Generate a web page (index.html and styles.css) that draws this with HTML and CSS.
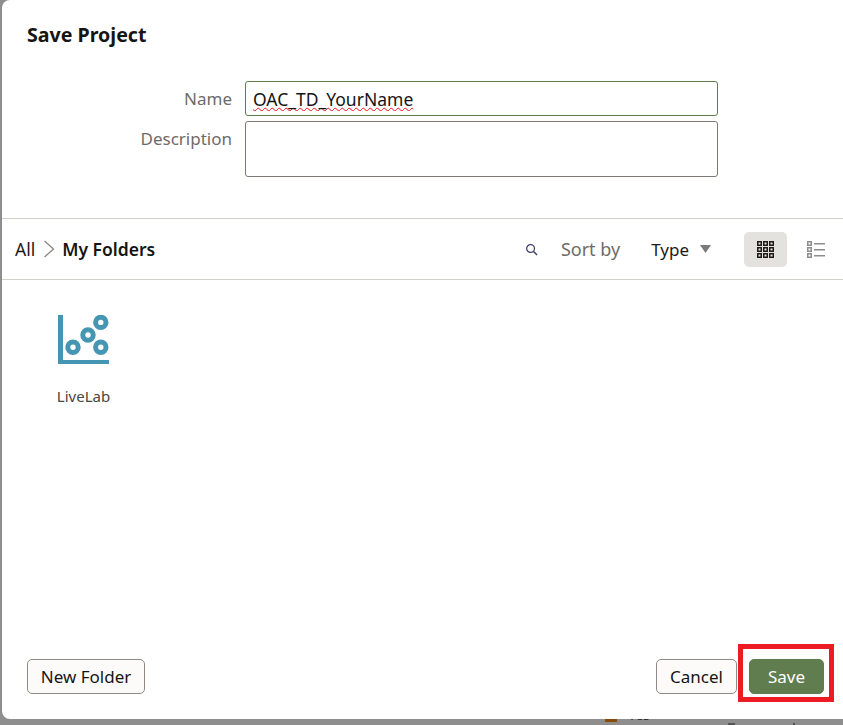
FILE: index.html
```html
<!DOCTYPE html>
<html lang="en">
<head>
  <meta charset="UTF-8">
  <title>Save Project</title>
  <link rel="stylesheet" href="styles.css">
</head>
<body>
  <div class="dialog">
    <h1 class="title">Save Project</h1>

    <div class="form">
      <label class="form-label" for="name">Name</label>
      <input class="name-input" id="name" value="OAC_TD_YourName" spellcheck="false">
      <label class="form-label" for="desc">Description</label>
      <textarea class="desc-input" id="desc" spellcheck="false"></textarea>
    </div>

    <div class="toolbar">
      <div class="crumbs">
        <span>All</span>
        <svg class="crumb-sep" width="12" height="18" viewBox="0 0 12 18"><path d="M1.5 1 L10.5 9 L1.5 17" fill="none" stroke="#8a8580" stroke-width="1.3"/></svg>
        <b>My Folders</b>
      </div>
      <div class="tools">
        <svg class="search-icon" width="13" height="13" viewBox="0 0 14 14"><circle cx="6" cy="6" r="4.2" fill="none" stroke="#3f4468" stroke-width="1.4"/><path d="M9.2 9.2 L13 13" stroke="#3f4468" stroke-width="1.6"/></svg>
        <span class="sort-label">Sort by</span>
        <span class="sort-value">Type</span>
        <svg class="sort-caret" width="11" height="8" viewBox="0 0 11 8"><path d="M0 0 H11 L5.5 8 Z" fill="#7b7b7b"/></svg>
        <button class="view-btn view-btn-on">
          <svg width="17" height="17" viewBox="0 0 17 17"><path fill-rule="evenodd" fill="#1d1a18" d="M0 0h5v5H0zM1.5 1.5v2h2v-2zM6 0h5v5H6zM7.5 1.5v2h2v-2zM12 0h5v5h-5zM13.5 1.5v2h2v-2zM0 6h5v5H0zM1.5 7.5v2h2v-2zM6 6h5v5H6zM7.5 7.5v2h2v-2zM12 6h5v5h-5zM13.5 7.5v2h2v-2zM0 12h5v5H0zM1.5 13.5v2h2v-2zM6 12h5v5H6zM7.5 13.5v2h2v-2zM12 12h5v5h-5zM13.5 13.5v2h2v-2z"/></svg>
        </button>
        <button class="view-btn">
          <svg width="18" height="17" viewBox="0 0 18 17"><path fill-rule="evenodd" fill="#8d8d8d" d="M0 0h5v5H0zM1.5 1.5v2h2v-2zM0 6h5v5H0zM1.5 7.5v2h2v-2zM0 12h5v5H0zM1.5 13.5v2h2v-2zM7 2h11v1.4H7zM7 8h11v1.4H7zM7 14h11v1.4H7z"/></svg>
        </button>
      </div>
    </div>

    <div class="folders">
      <div class="folder">
        <svg width="51" height="49" viewBox="0 0 51 49">
          <path d="M0 0h5v45h46v4H0z" fill="#4496b2"/>
          <g fill="none" stroke="#4496b2" stroke-width="5">
            <circle cx="15" cy="32.3" r="5.2"/>
            <circle cx="30" cy="20" r="5.2"/>
            <circle cx="42.8" cy="7.4" r="5.2"/>
            <circle cx="42.8" cy="32.3" r="5.2"/>
          </g>
        </svg>
        <span class="folder-name">LiveLab</span>
      </div>
    </div>

    <div class="footer">
      <button class="btn btn-new">New Folder</button>
      <div class="footer-right">
        <button class="btn">Cancel</button>
        <button class="btn btn-primary">Save</button>
      </div>
    </div>
    <div class="callout"></div>
  </div>

  <div class="behind">
    <span class="behind-swatch"></span>
    <span class="behind-text">Yes</span>
    <span class="behind-mark"></span>
    <span class="behind-mark behind-mark-small"></span>
  </div>
</body>
</html>
```

FILE: styles.css
```css
* {
  box-sizing: border-box;
}
html, body {
  height: 100%;
}
body {
  margin: 0;
  overflow: hidden;
  background: #8e8e8e;
  font-family: 'Noto Sans', sans-serif;
  color: #1d1a18;
}
.dialog {
  position: relative;
  display: flex;
  flex-direction: column;
  height: 719px;
  margin-left: 2px;
  background: #fff;
  border-radius: 8px 0 0 8px;
}
.title {
  margin: 0;
  padding: 21px 0 0 25px;
  height: 81px;
  font-size: 19.6px;
  line-height: 27px;
  font-weight: 700;
  color: #161513;
}
.form {
  display: grid;
  grid-template-columns: 230px 473px;
  align-content: start;
  column-gap: 13px;
  row-gap: 5px;
  height: 138px;
  border-bottom: 1px solid #d4d1cc;
}
.form-label {
  justify-self: end;
  font-size: 17px;
  line-height: 35px;
  color: #6f6b67;
}
.name-input, .desc-input {
  display: block;
  width: 473px;
  margin: 0;
  padding: 0 7px;
  background: #fff;
  border-radius: 3px;
  font-family: inherit;
  font-size: 17.5px;
  color: #161513;
  outline: none;
  resize: none;
}
.name-input {
  height: 35px;
  border: 1px solid #5f7d4f;
  text-decoration: underline wavy #f0101c 1.2px;
}
.desc-input {
  height: 56px;
  border: 1px solid #7d7873;
}
.toolbar {
  display: flex;
  align-items: center;
  justify-content: space-between;
  height: 61px;
  padding: 0 13px;
  border-bottom: 1px solid #d4d1cc;
}
.crumbs {
  display: flex;
  align-items: center;
  font-size: 17.5px;
}
.crumbs b {
  font-weight: 600;
  color: #161513;
}
.crumb-sep {
  margin: 0 7px 0 8px;
}
.tools {
  display: flex;
  align-items: center;
  font-size: 17px;
}
.search-icon {
  margin-right: 23px;
}
.sort-label {
  font-size: 18px;
  color: #6f6b67;
  margin-right: 31px;
}
.sort-value {
  margin-right: 11px;
}
.sort-caret {
  margin-right: 33px;
}
.view-btn {
  display: flex;
  align-items: center;
  justify-content: center;
  width: 43px;
  height: 35px;
  padding: 0;
  border: none;
  border-radius: 5px;
  background: none;
}
.view-btn-on {
  background: #e4e2de;
  margin-right: 15px;
}
.view-btn:last-child {
  width: 28px;
}
.folders {
  flex: 1;
  padding: 35px 0 0 54px;
}
.folder {
  display: flex;
  flex-direction: column;
  align-items: center;
  width: 55px;
  gap: 22px;
}
.folder-name {
  font-size: 15px;
  line-height: 20px;
  color: #4a4540;
  white-space: nowrap;
}
.footer {
  display: flex;
  justify-content: space-between;
  padding: 0 19px 25px 25px;
}
.footer-right {
  display: flex;
  gap: 12px;
}
.btn {
  height: 35px;
  padding: 0 13px;
  background: #fcfbfa;
  border: 1px solid #8f8a85;
  border-radius: 5px;
  font-family: inherit;
  font-size: 17px;
  color: #161513;
}
.btn-new {
  width: 118px;
  padding: 0;
}
.btn-primary {
  width: 75px;
  background: #5f7d4f;
  border-color: #5f7d4f;
  color: #fff;
}
.callout {
  position: absolute;
  left: 736px;
  top: 644px;
  width: 96px;
  height: 58px;
  border: 5px solid #ed1c24;
}
.behind {
  display: flex;
  align-items: flex-start;
  height: 6px;
  padding-left: 605px;
  overflow: hidden;
}
.behind-swatch {
  width: 12px;
  height: 3px;
  background: #8a4b08;
}
.behind-text {
  margin: -14px 0 0 11px;
  font-size: 14px;
  line-height: 20px;
  color: #2b2b2b;
}
.behind-mark {
  width: 7px;
  height: 2px;
  margin: 4px 0 0 78px;
  background: #555;
}
.behind-mark-small {
  width: 2px;
  margin-left: 58px;
}
```
